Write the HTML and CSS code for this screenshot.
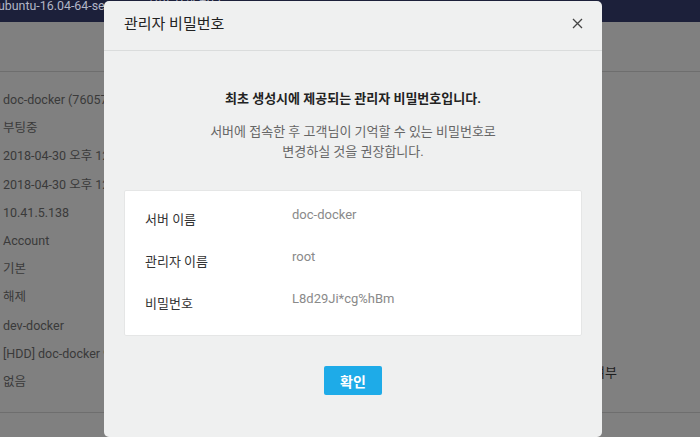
FILE: index.html
```html
<!DOCTYPE html>
<html lang="ko">
<head>
<meta charset="utf-8">
<title>관리자 비밀번호</title>
<link rel="stylesheet" href="styles.css">
</head>
<body>
<div class="page">
  <div class="topbar"><span class="topbar-text">ubuntu-16.04-64-server &nbsp; | &nbsp; 서버 상세 정보</span></div>
  <div class="subbar"></div>
  <div class="content">
    <ul class="list">
      <li>doc-docker (760579)</li>
      <li>부팅중</li>
      <li>2018-04-30 오후 12:00</li>
      <li>2018-04-30 오후 12:05</li>
      <li>10.41.5.138</li>
      <li>Account</li>
      <li>기본</li>
      <li>해제</li>
      <li>dev-docker</li>
      <li>[HDD] doc-docker 9</li>
      <li>없음</li>
    </ul>
    <div class="right-col">
      <span class="right-label">반납 보호 여부</span>
    </div>
  </div>
</div>

<div class="modal">
  <div class="modal-header">
    <h1 class="modal-title">관리자 비밀번호</h1>
    <button class="close" aria-label="닫기">
      <svg width="11" height="11" viewBox="0 0 11 11"><path d="M1 1 L10 10 M10 1 L1 10" stroke="#444" stroke-width="1.3" fill="none"/></svg>
    </button>
  </div>
  <div class="modal-body">
    <p class="lead">최초 생성시에 제공되는 관리자 비밀번호입니다.</p>
    <p class="desc">서버에 접속한 후 고객님이 기억할 수 있는 비밀번호로<br>변경하실 것을 권장합니다.</p>
    <div class="card">
      <div class="row"><span class="label">서버 이름</span><span class="value">doc-docker</span></div>
      <div class="row"><span class="label">관리자 이름</span><span class="value">root</span></div>
      <div class="row"><span class="label">비밀번호</span><span class="value">L8d29Ji*cg%hBm</span></div>
    </div>
    <div class="actions"><button class="ok">확인</button></div>
  </div>
</div>
</body>
</html>
```

FILE: styles.css
```css
* { box-sizing: border-box; }
html, body {
  margin: 0;
  padding: 0;
  width: 700px;
  height: 437px;
  overflow: hidden;
  background: #808080;
  font-family: Roboto, "Noto Sans CJK KR", sans-serif;
}
.page {
  width: 700px;
  height: 437px;
  display: flex;
  flex-direction: column;
}
.topbar {
  height: 22px;
  background: #1c203a;
  overflow: hidden;
  white-space: nowrap;
}
.topbar-text {
  display: block;
  margin-left: -2px;
  margin-top: -2px;
  font-size: 12.4px;
  line-height: 16px;
  color: #b2b6c6;
}
.subbar {
  height: 50px;
  border-bottom: 1px solid #6e6e6e;
}
.content {
  height: 341px;
  border-bottom: 1px solid #6e6e6e;
  display: flex;
  justify-content: space-between;
}
.list {
  list-style: none;
  margin: 0;
  padding: 14px 0 0 3px;
  font-size: 12.5px;
  line-height: 28.2px;
  color: #3a3a3a;
  white-space: nowrap;
}
.right-col {
  padding: 290px 83px 0 0;
}
.right-label {
  font-size: 13px;
  line-height: 18px;
  color: #1e1e1e;
}

.modal {
  position: absolute;
  left: 104px;
  top: 1px;
  width: 498px;
  height: 436px;
  background: #eff0f0;
  border-radius: 5px;
  overflow: hidden;
}
.modal-header {
  height: 50px;
  border-bottom: 1px solid #dadcdc;
  display: flex;
  align-items: center;
  justify-content: space-between;
  padding: 0 19px 0 20px;
}
.modal-title {
  margin: 0;
  font-size: 15px;
  font-weight: 400;
  color: #222;
  line-height: 20px;
  padding-bottom: 4px;
}
.close {
  border: 0;
  background: none;
  padding: 0;
  width: 12px;
  height: 12px;
  display: flex;
  align-items: center;
  justify-content: center;
  margin-bottom: 4px;
}
.modal-body {
  padding: 38px 20px 0;
  display: flex;
  flex-direction: column;
}
.lead {
  margin: 0;
  text-align: center;
  font-size: 13px;
  font-weight: 700;
  line-height: 20px;
  color: #222;
}
.desc {
  margin: 13px 0 0;
  text-align: center;
  font-size: 13px;
  line-height: 20px;
  color: #666;
}
.card {
  margin-top: 28px;
  background: #fff;
  border: 1px solid #e5e6e6;
  border-radius: 2px;
  padding: 14px 20px 4px;
}
.row {
  display: flex;
  height: 42px;
  font-size: 13px;
  line-height: 20px;
}
.label {
  width: 147px;
  padding-top: 5px;
  color: #333;
}
.value {
  color: #8a8a8a;
}
.actions {
  margin-top: 30px;
  display: flex;
  justify-content: center;
}
.ok {
  width: 58px;
  height: 29px;
  border: 0;
  border-radius: 2px;
  background: #1eabe8;
  color: #fff;
  font-family: Roboto, "Noto Sans CJK KR", sans-serif;
  font-size: 14px;
  font-weight: 700;
  padding: 0;
}
```
